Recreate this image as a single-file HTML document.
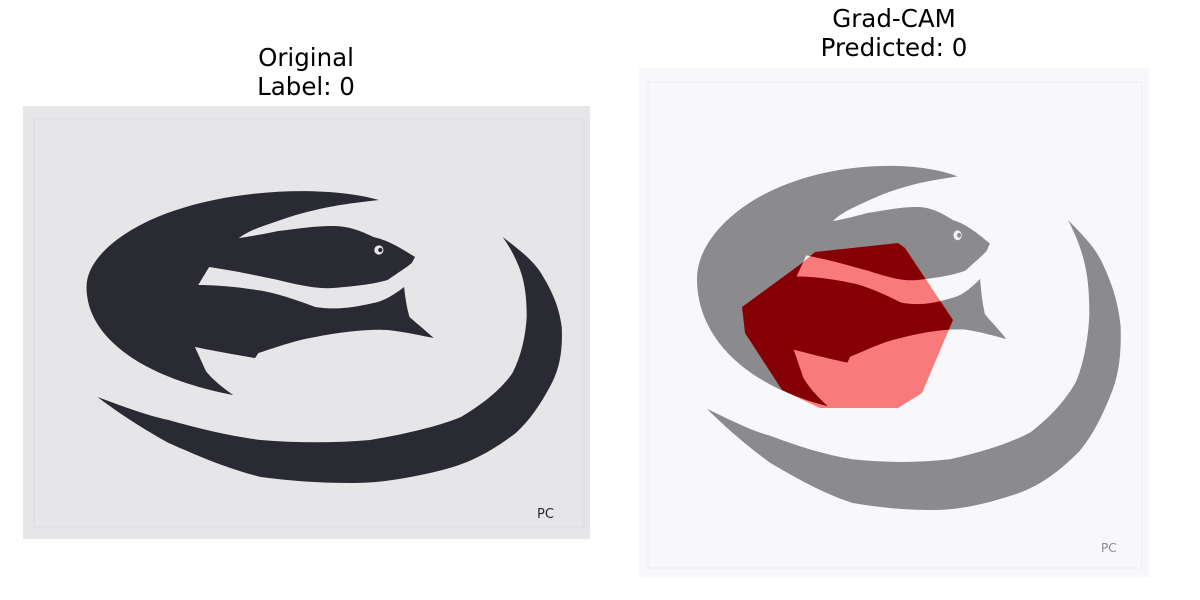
<!DOCTYPE html>
<html><head><meta charset="utf-8"><style>
html,body{margin:0;padding:0;background:#fff;width:1200px;height:600px;overflow:hidden}
svg{display:block}
</style></head><body>
<svg width="1200" height="600" viewBox="0 0 1200 600" xmlns="http://www.w3.org/2000/svg">
<defs>
<g id="fish">
<path d="M325,94 C280,80 200,82 140,104 C95,120 58,150 58,181 C58,232 110,272 192,289 C180,280 172,272 167,265 L157,241 C180,246 200,250 212,252 L215,247 C235,240 250,234 267,231 C290,226 315,223 333,224 C350,226 365,230 375,232 C365,222 358,216 353,211 C350,200 349,190 348,181 C340,188 330,195 320,197 C300,202 285,204 267,201 C245,192 228,186 213,184 C190,180 172,179 160,179 L170,161 C195,165 215,170 233,174 C255,180 270,183 283,182 C305,180 320,178 333,174 C345,165 352,160 355,157 L358,151 C345,142 333,134 320,131 C305,123 295,120 283,120 C265,120 250,123 233,125 C220,128 205,131 197,132 C205,126 212,123 217,121 C235,114 250,108 267,104 C290,98 310,96 325,94 Z"/>
<path d="M438,131 C455,145 466,155 473,167 C486,190 490,205 492,221 C493,245 490,262 483,277 C472,300 462,315 450,327 C425,348 405,358 383,364 C350,373 325,377 300,377 C270,377 245,375 217,371 C185,362 160,350 133,337 C105,320 85,305 68,291 C95,302 115,310 133,314 C165,324 190,330 217,334 C250,337 285,337 317,334 C350,328 380,320 400,311 C420,298 437,283 447,267 C455,250 459,230 460,211 C460,190 458,175 453,161 C449,150 444,140 438,131 Z"/>
</g>
<clipPath id="hex"><polygon points="815,252 898,243 905,248 953,320 922,393 898,408 820,408 782,390 745,333 742,307 802,263"/></clipPath>
<clipPath id="rimg"><rect x="639" y="68" width="510" height="509"/></clipPath>
</defs>
<text x="306" y="66" font-family="DejaVu Sans, sans-serif" font-size="24.5" text-anchor="middle" fill="#000">Original</text>
<text x="306" y="95" font-family="DejaVu Sans, sans-serif" font-size="24.5" text-anchor="middle" fill="#000">Label: 0</text>
<text x="894" y="27" font-family="DejaVu Sans, sans-serif" font-size="24.5" text-anchor="middle" fill="#000">Grad-CAM</text>
<text x="894" y="56" font-family="DejaVu Sans, sans-serif" font-size="24.5" text-anchor="middle" fill="#000">Predicted: 0</text>
<rect x="23" y="106" width="567" height="433" fill="#e6e6e8"/>
<rect x="34" y="119" width="550" height="408" fill="none" stroke="#dcdcde" stroke-width="1"/>
<g transform="translate(23,106) scale(1.095,1)" fill="#2a2a33">
<use href="#fish"/>
<ellipse cx="325" cy="144" rx="4.2" ry="4.6" fill="#e6e6e8"/><ellipse cx="326.3" cy="144" rx="2" ry="2.2" fill="#2a2a33"/>
</g>
<text x="537" y="518" font-family="DejaVu Sans, sans-serif" font-size="13" fill="#2a2a33">PC</text>
<g clip-path="url(#rimg)">
<rect x="639" y="68" width="510" height="509" fill="#f8f8fa"/>
<rect x="648" y="82" width="494" height="486" fill="none" stroke="#eeeef0"/>
<g transform="translate(640.4,65.5) scale(0.976,1.179)" fill="#8b8b8e">
<use href="#fish"/>
<circle cx="325" cy="144" r="4.2" fill="#f0f0f2"/><circle cx="326.5" cy="144" r="2" fill="#8b8b8e"/>
</g>
<polygon points="815,252 898,243 905,248 953,320 922,393 898,408 820,408 782,390 745,333 742,307 802,263" fill="#f87a7a"/>
<g clip-path="url(#hex)"><g transform="translate(640.4,65.5) scale(0.976,1.179)" fill="#850004"><use href="#fish"/></g></g>
<text x="1101" y="552" font-family="DejaVu Sans, sans-serif" font-size="12" fill="#8b8b8e">PC</text>
</g>
</svg>
</body></html>
